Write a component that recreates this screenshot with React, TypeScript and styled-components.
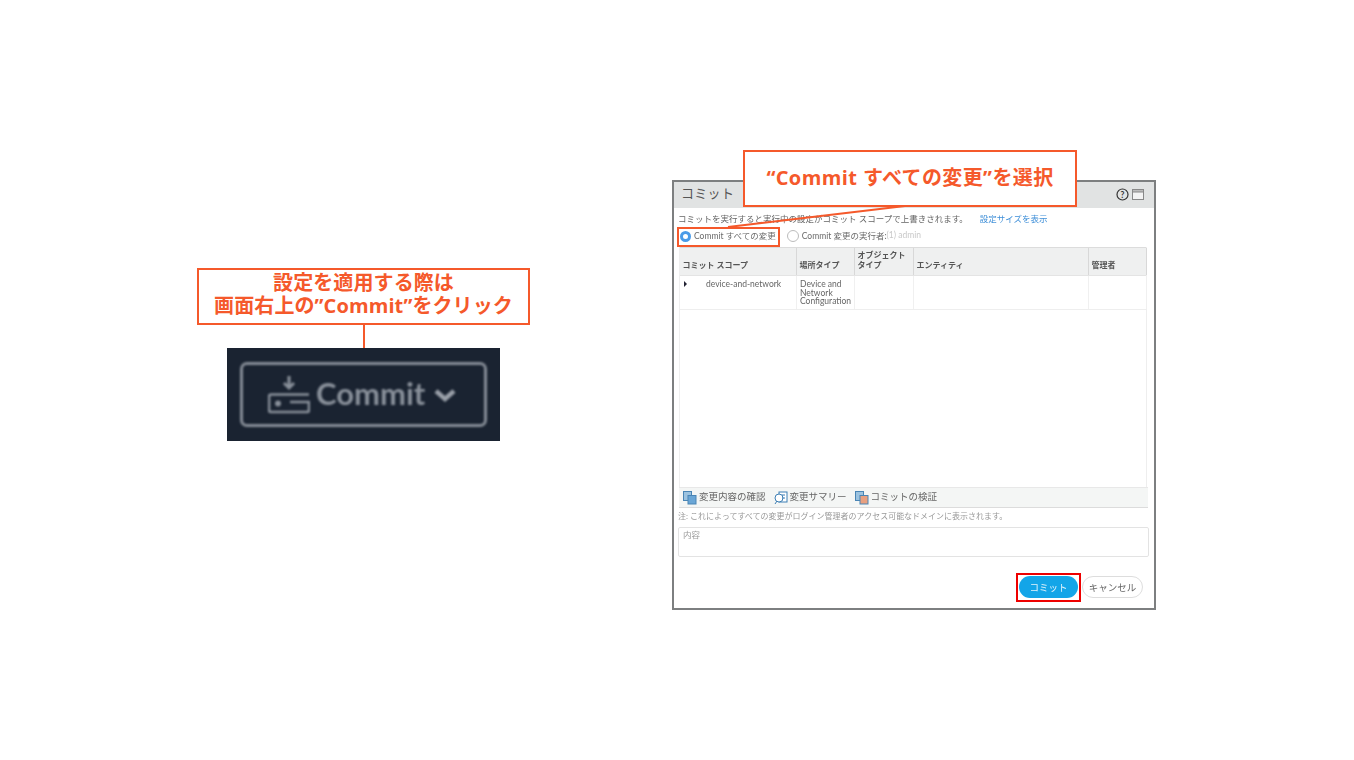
import React from 'react';
import styled, { createGlobalStyle } from 'styled-components';

const ORANGE = '#f5592b';
const JP = `Lato, "Noto Sans CJK JP", sans-serif`;

const GlobalStyle = createGlobalStyle`
  html, body {
    margin: 0;
    padding: 0;
    background: #fff;
  }
`;

const Page = styled.div`
  width: 1354px;
  height: 760px;
  display: flex;
  align-items: flex-start;
  padding-left: 197px;
  box-sizing: border-box;
  overflow: hidden;
  font-family: ${JP};
`;

const LeftGroup = styled.div`
  width: 333px;
  margin-top: 268px;
  display: flex;
  flex-direction: column;
  align-items: center;
`;

const NoteBox = styled.div`
  width: 333px;
  height: 57px;
  box-sizing: border-box;
  border: 2px solid ${ORANGE};
  background: #fff;
  color: ${ORANGE};
  font-family: "Open Sans", "Noto Sans CJK JP", sans-serif;
  font-weight: 700;
  font-size: 20px;
  letter-spacing: 0.1px;
  line-height: 23px;
  text-align: center;
  padding-top: 1px;
  white-space: nowrap;
`;

const Stem = styled.div`
  width: 2px;
  height: 23px;
  background: ${ORANGE};
`;

const DarkShot = styled.div`
  width: 273px;
  height: 93px;
  background: #1a2331;
  display: flex;
  align-items: center;
  justify-content: center;
`;

const DarkButton = styled.div`
  width: 247px;
  height: 65px;
  box-sizing: border-box;
  border: 3.5px solid #868d97;
  border-radius: 7px;
  display: flex;
  align-items: center;
  padding-left: 25px;
  color: #8a919b;
  filter: blur(1px);
  font-family: Lato, sans-serif;
  font-weight: 700;
  font-size: 31px;
  svg {
    flex: none;
  }
`;

const DarkLabel = styled.span`
  margin-left: 6px;
  margin-top: -4px;
`;

const Chevron = styled.svg`
  margin-left: 9px;
`;

const Dialog = styled.div`
  position: relative;
  width: 484px;
  height: 430px;
  margin-top: 180px;
  margin-left: 142px;
  box-sizing: border-box;
  border: 2px solid #7d7f80;
  background: #fff;
  flex: none;
`;

const DialogInner = styled.div`
  height: 100%;
  display: flex;
  flex-direction: column;
  filter: blur(0.5px);
`;

const TitleBar = styled.div`
  height: 26px;
  flex: none;
  box-sizing: border-box;
  background: #e1e3e3;
  display: flex;
  align-items: center;
  justify-content: space-between;
  padding: 0 10px 2px 7px;
  font-size: 13px;
  color: #555;
  letter-spacing: 0.3px;
`;

const TitleText = styled.span`
  margin-top: -4px;
`;

const TitleIcons = styled.div`
  display: flex;
  align-items: center;
  gap: 3px;
`;

const InfoRow = styled.div`
  height: 12px;
  margin: 4px 0 0 4px;
  display: flex;
  align-items: center;
  gap: 12px;
  font-size: 8.5px;
  color: #666;
  white-space: nowrap;
`;

const LinkText = styled.span`
  color: #3f8fd8;
`;

const RadioRow = styled.div`
  height: 20px;
  margin: 2px 0 0 6px;
  display: flex;
  align-items: center;
  font-size: 8.5px;
  color: #6b6b6b;
  white-space: nowrap;
`;

const Radio = styled.span<{ $on?: boolean }>`
  width: ${p => (p.$on ? 11 : 12)}px;
  height: ${p => (p.$on ? 11 : 12)}px;
  box-sizing: border-box;
  border-radius: 50%;
  flex: none;
  background: #fff;
  border: ${p => (p.$on ? '3px solid #4a9be8' : '1px solid #bbb')};
  margin-right: 3px;
`;

const RadioLabel = styled.span<{ $gap?: number }>`
  margin-right: ${p => p.$gap ?? 0}px;
  margin-top: -3px;
`;

const Muted = styled.span`
  color: #c8c8c8;
  margin-top: -3px;
`;

const ScopeTable = styled.div`
  margin: 1px 7px 0 5px;
  height: 240px;
  flex: none;
  border-left: 1px solid #eee;
  border-right: 1px solid #eee;
`;

const TableRow = styled.div<{ $head?: boolean }>`
  display: grid;
  grid-template-columns: 117px 58px 59px 175px 58px;
  height: ${p => (p.$head ? 29 : 34)}px;
  background: ${p => (p.$head ? '#eff0f0' : '#fff')};
  border-top: ${p => (p.$head ? '1px solid #dcdcdc' : 'none')};
  border-bottom: 1px solid ${p => (p.$head ? '#e4e4e4' : '#eee')};
  box-sizing: border-box;
`;

const HeadCell = styled.div`
  display: flex;
  align-items: flex-end;
  padding: 0 0 5px 2.5px;
  border-right: 1px solid #d8d8d8;
  font-size: 8px;
  line-height: 10px;
  font-weight: 700;
  color: #555;
  white-space: pre-line;
`;

const BodyCell = styled.div`
  padding: 4px 0 0 3px;
  border-right: 1px solid #f0f0f0;
  font-size: 8.5px;
  line-height: 8.5px;
  color: #666;
  display: flex;
  align-items: flex-start;
`;

const Arrow = styled.span`
  width: 0;
  height: 0;
  margin: 1px 19px 0 1px;
  border-left: 3px solid #223;
  border-top: 3px solid transparent;
  border-bottom: 3px solid transparent;
  flex: none;
`;

const ToolBar = styled.div`
  margin: 0 6px 0 5px;
  height: 21px;
  flex: none;
  background: #f4f6f5;
  border-top: 1px solid #e8e8e8;
  border-bottom: 1px solid #dcdcdc;
  box-sizing: border-box;
  display: flex;
  align-items: center;
  padding-left: 4px;
  gap: 8px;
  font-size: 9.5px;
  color: #666;
`;

const ToolItem = styled.span`
  display: flex;
  align-items: center;
  gap: 2px;
  line-height: 14px;
  span {
    margin-top: -2px;
  }
`;

const Note = styled.div`
  margin: 2px 0 0 4px;
  height: 12px;
  font-size: 8px;
  line-height: 12px;
  color: #999;
  white-space: nowrap;
`;

const MemoBox = styled.div`
  margin: 5px 5px 0 4px;
  height: 30px;
  flex: none;
  box-sizing: border-box;
  border: 1px solid #e3e3e3;
  border-radius: 2px;
  padding: 0 4px;
  font-size: 8.5px;
  color: #999;
`;

const Footer = styled.div`
  margin-top: 19px;
  display: flex;
  justify-content: flex-end;
  gap: 4px;
  padding-right: 11px;
`;

const PillButton = styled.div<{ $primary?: boolean }>`
  width: ${p => (p.$primary ? 59 : 61)}px;
  height: 22px;
  box-sizing: border-box;
  border-radius: 11px;
  display: flex;
  align-items: center;
  justify-content: center;
  padding-bottom: 1px;
  font-size: 9.5px;
  background: ${p => (p.$primary ? '#13a5e8' : '#fff')};
  color: ${p => (p.$primary ? '#e4f4fc' : '#666')};
  border: ${p => (p.$primary ? 'none' : '1px solid #ddd')};
`;

const Callout = styled.div`
  position: absolute;
  left: 69px;
  top: -32px;
  width: 334px;
  height: 57px;
  box-sizing: border-box;
  border: 2px solid ${ORANGE};
  background: #fff;
  color: ${ORANGE};
  font-family: "Open Sans", "Noto Sans CJK JP", sans-serif;
  font-weight: 700;
  font-size: 20px;
  letter-spacing: 0.4px;
  padding-bottom: 4px;
  display: flex;
  align-items: center;
  justify-content: center;
`;

const Leader = styled.svg`
  position: absolute;
  left: 0;
  top: 0;
  overflow: visible;
  pointer-events: none;
`;

const Highlight = styled.div<{ $color: string; $w: number; $h: number; $l: number; $t: number }>`
  position: absolute;
  left: ${p => p.$l}px;
  top: ${p => p.$t}px;
  width: ${p => p.$w}px;
  height: ${p => p.$h}px;
  box-sizing: border-box;
  border: 2px solid ${p => p.$color};
`;

function DownloadIcon() {
  return (
    <svg width="42" height="38" viewBox="0 0 42 38" fill="none" stroke="#8a919b" strokeWidth="3">
      <path d="M21 0v11M16 7l5 5 5-5" />
      <path d="M41 18.5H3q-2 0-2 2V34q0 2 2 2h36q2 0 2-2v-8H22" strokeWidth="2.6" />
      <circle cx="10" cy="27.5" r="3" fill="#8a919b" stroke="none" />
    </svg>
  );
}

function DocIcon({ accent, ring }: { accent: string; ring?: boolean }) {
  return (
    <svg width="14" height="14" viewBox="0 0 14 14" fill="none">
      {ring ? (
        <>
          <rect x="5" y="1" width="8" height="10" fill="#fff" stroke="#3d7fb5" />
          <circle cx="5" cy="7" r="4" fill="#fff" stroke="#3d7fb5" />
          <path d="M1 13l2-3" stroke="#3d7fb5" />
          <path d="M8 4h3M8 7h3" stroke="#3d7fb5" />
        </>
      ) : (
        <>
          <rect x="0.5" y="0.5" width="8" height="9" fill="#9cc3e0" stroke="#4a85b5" />
          <rect x="5" y="4.5" width="8" height="8.5" fill={accent} stroke="#4a85b5" />
        </>
      )}
    </svg>
  );
}

export default function App() {
  return (
    <Page>
      <GlobalStyle />
      <LeftGroup>
        <NoteBox>
          設定を適用する際は
          <br />
          画面右上の”Commit”をクリック
        </NoteBox>
        <Stem />
        <DarkShot>
          <DarkButton>
            <DownloadIcon />
            <DarkLabel>Commit</DarkLabel>
            <Chevron width="22" height="14" viewBox="0 0 22 14" fill="none" stroke="#9aa0a9" strokeWidth="4.5">
              <path d="M2 3l9 8 9-8" />
            </Chevron>
          </DarkButton>
        </DarkShot>
      </LeftGroup>

      <Dialog>
        <DialogInner>
          <TitleBar>
            <TitleText>コミット</TitleText>
            <TitleIcons>
              <svg width="13" height="13" viewBox="0 0 13 13" fill="none">
                <circle cx="6.5" cy="6.5" r="5.5" stroke="#333" strokeWidth="1.2" />
                <text x="6.5" y="9.5" textAnchor="middle" fontSize="8.5" fontWeight="700" fill="#333" fontFamily="Lato">?</text>
              </svg>
              <svg width="12" height="11" viewBox="0 0 12 11" fill="none">
                <rect x="0.5" y="0.5" width="11" height="10" fill="#f3f3f3" stroke="#888" />
                <rect x="0.5" y="0.5" width="11" height="2.5" fill="#bbb" stroke="#888" />
              </svg>
            </TitleIcons>
          </TitleBar>
          <InfoRow>
            コミットを実行すると実行中の設定がコミット スコープで上書きされます。
            <LinkText>設定サイズを表示</LinkText>
          </InfoRow>
          <RadioRow>
            <Radio $on />
            <RadioLabel $gap={11}>Commit すべての変更</RadioLabel>
            <Radio />
            <RadioLabel>Commit 変更の実行者:</RadioLabel>
            <Muted>(1) admin</Muted>
          </RadioRow>
          <ScopeTable>
            <TableRow $head>
              <HeadCell>コミット スコープ</HeadCell>
              <HeadCell>場所タイプ</HeadCell>
              <HeadCell>{'オブジェクト\nタイプ'}</HeadCell>
              <HeadCell>エンティティ</HeadCell>
              <HeadCell>管理者</HeadCell>
            </TableRow>
            <TableRow>
              <BodyCell>
                <Arrow />
                device-and-network
              </BodyCell>
              <BodyCell>
                Device and
                <br />
                Network
                <br />
                Configuration
              </BodyCell>
              <BodyCell />
              <BodyCell />
              <BodyCell />
            </TableRow>
          </ScopeTable>
          <ToolBar>
            <ToolItem>
              <DocIcon accent="#6aa6d6" />
              <span>変更内容の確認</span>
            </ToolItem>
            <ToolItem>
              <DocIcon accent="#fff" ring />
              <span>変更サマリー</span>
            </ToolItem>
            <ToolItem>
              <DocIcon accent="#e8a080" />
              <span>コミットの検証</span>
            </ToolItem>
          </ToolBar>
          <Note>注: これによってすべての変更がログイン管理者のアクセス可能なドメインに表示されます。</Note>
          <MemoBox>内容</MemoBox>
          <Footer>
            <PillButton $primary>コミット</PillButton>
            <PillButton>キャンセル</PillButton>
          </Footer>
        </DialogInner>

        <Leader width="484" height="80">
          <path d="M231 24L54 45" stroke={ORANGE} strokeWidth="2" />
        </Leader>
        <Callout>“Commit すべての変更”を選択</Callout>
        <Highlight $color={ORANGE} $l={3} $t={45} $w={103} $h={20} />
        <Highlight $color="#ee0000" $l={342} $t={391} $w={65} $h={29} />
      </Dialog>
    </Page>
  );
}
